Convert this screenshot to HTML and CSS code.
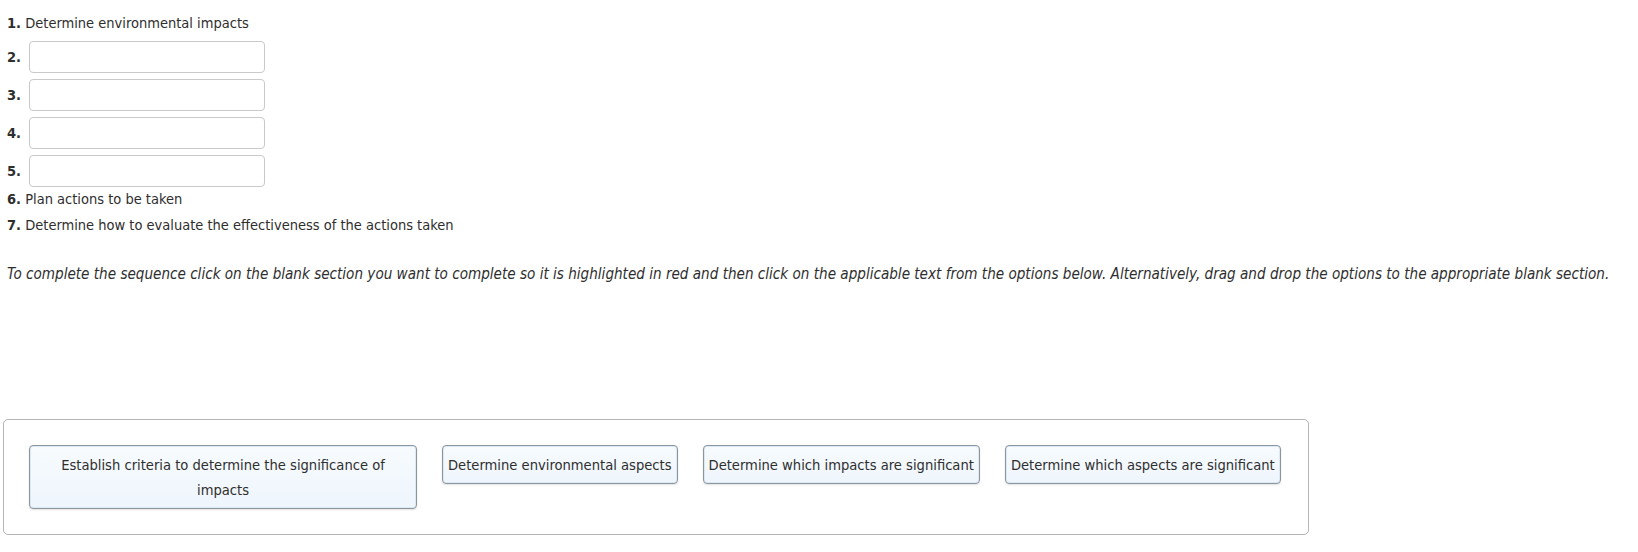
FILE: index.html
```html
<!DOCTYPE html>
<html>
<head>
<meta charset="utf-8">
<link rel="stylesheet" href="styles.css">
</head>
<body>
<div class="page">
  <div class="seq">
    <div class="item text"><b class="num">1.</b> Determine environmental impacts</div>
    <div class="item slot first"><b class="num">2.</b><div class="blank"></div></div>
    <div class="item slot"><b class="num">3.</b><div class="blank"></div></div>
    <div class="item slot"><b class="num">4.</b><div class="blank"></div></div>
    <div class="item slot"><b class="num">5.</b><div class="blank"></div></div>
    <div class="item text six"><b class="num">6.</b> Plan actions to be taken</div>
    <div class="item text seven"><b class="num">7.</b> Determine how to evaluate the effectiveness of the actions taken</div>
  </div>
  <p class="instr">To complete the sequence click on the blank section you want to complete so it is highlighted in red and then click on the applicable text from the options below. Alternatively, drag and drop the options to the appropriate blank section.</p>
  <div class="options">
    <div class="opt wide">Establish criteria to determine the significance of impacts</div>
    <div class="opt">Determine environmental aspects</div>
    <div class="opt">Determine which impacts are significant</div>
    <div class="opt">Determine which aspects are significant</div>
  </div>
</div>
</body>
</html>
```
FILE: styles.css
```css
html, body { margin: 0; padding: 0; background: #fff; }
body { font-family: "DejaVu Sans Condensed", "DejaVu Sans", sans-serif; font-size: 14.5px; color: #2e2e2e; }
.page { padding-left: 7px; }
.seq { padding-top: 11px; display: flex; flex-direction: column; }
.item { display: flex; align-items: center; }
.item.text { height: 25px; line-height: 25px; display: block; white-space: nowrap; }
.item.slot { height: 32px; margin-top: 6px; }
.item.slot.first { margin-top: 5px; }
.item.seven { margin-top: 1px; }
.num { font-weight: bold; }
.slot .num { width: 22px; }
.blank { width: 236px; height: 32px; box-sizing: border-box; border: 1px solid #c9c9c9; border-radius: 4px; background: #fff; }
.instr { margin: 24px 0 0; line-height: 25px; font-style: italic; font-size: 15.1px; white-space: nowrap; }
.options { margin: 132px 0 0 -4px; width: 1306px; height: 116px; box-sizing: border-box; border: 1px solid #b4b4b4; border-radius: 5px; padding: 25px 25px; display: flex; align-items: flex-start; gap: 25px; }
.opt { box-sizing: border-box; border: 1px solid #8d959d; border-radius: 4px; background: linear-gradient(#f7fbfe, #eef5fc); box-shadow: inset 0 0 0 1px #dbe9f6, 0 1px 2px rgba(0,0,0,0.12); padding: 6px 5px; line-height: 25px; font-size: 14.6px; text-align: center; white-space: nowrap; }
.opt.wide { width: 388px; padding: 6px 30px; white-space: normal; }
```
